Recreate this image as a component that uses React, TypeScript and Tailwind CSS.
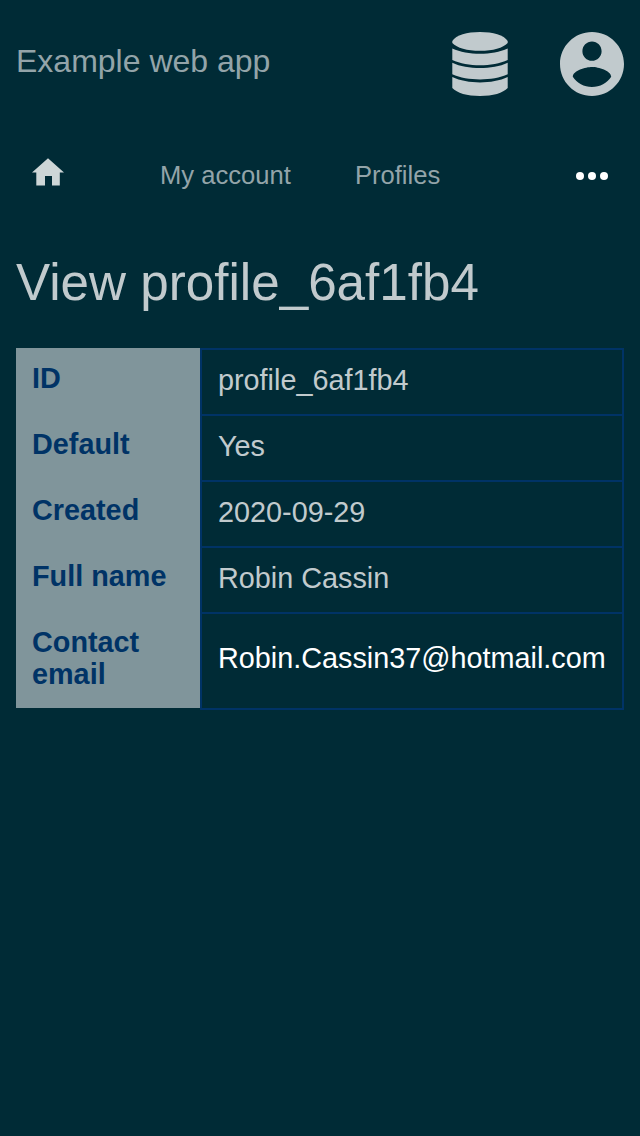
const rows = [
  { label: "ID", value: "profile_6af1fb4" },
  { label: "Default", value: "Yes" },
  { label: "Created", value: "2020-09-29" },
  { label: "Full name", value: "Robin Cassin" },
];

function DatabaseIcon() {
  return (
    <svg viewBox="0 0 56 64" className="h-16 w-14 fill-current">
      <path d="M.3 9C4 3 15 0 28 0S52 3 55.7 9V11C51 16 41 18.800 28 18.800S5 16 .3 11z" />
      <path d="M.3 16.600C8 20.300 18 21.800 28 21.800S48 20.300 55.7 16.600V28C48 31.700 38 33.200 28 33.200S8 31.700 .3 28z" />
      <path d="M.3 30.800C8 34.500 18 36 28 36S48 34.500 55.7 30.800V42.300C48 46 38 47.400 28 47.400S8 46 .3 42.300z" />
      <path d="M.3 45C8 48.700 18 50.400 28 50.400S48 48.700 55.7 45V56C51 61 41 64 28 64S5 61 .3 56z" />
    </svg>
  );
}

function AccountIcon() {
  return (
    <svg viewBox="2 2 20 20" className="h-16 w-16 fill-current">
      <path d="M12 2C6.480 2 2 6.480 2 12s4.480 10 10 10 10-4.480 10-10S17.520 2 12 2zm0 3c1.660 0 3 1.340 3 3s-1.340 3-3 3-3-1.340-3-3 1.340-3 3-3zm0 14.200c-2.500 0-4.710-1.280-6-3.220.03-1.990 4-3.080 6-3.080 1.990 0 5.970 1.090 6 3.080-1.290 1.940-3.500 3.220-6 3.220z" />
    </svg>
  );
}

export default function App() {
  return (
    <div className="min-h-[1136px] w-[640px] bg-[#002b36] font-['Liberation_Sans',sans-serif] text-[#c1cacd]">
      <header className="flex h-32 items-start justify-between px-4 pt-8">
        <h1 className="pt-[11px] text-[32px] leading-[37px] text-[#93a4a9]">Example web app</h1>
        <div className="flex gap-[52px]">
          <DatabaseIcon />
          <AccountIcon />
        </div>
      </header>
      <nav className="flex h-24 items-center px-8 text-[25.6px] text-[#93a4a9]">
        <svg viewBox="0 0 32 28" className="mb-2 h-7 w-8 fill-[#cdd6d7]">
          <path d="M16 .2L32 14.600h-4.200v13h-7.800V18h-7v9.600H4.300v-13H0z" />
        </svg>
        <a className="mb-0.5 ml-24">My account</a>
        <a className="mb-0.5 ml-16">Profiles</a>
        <svg viewBox="0 0 32 8" className="ml-auto h-2 w-8 fill-white">
          <circle cx="4" cy="4" r="4" />
          <circle cx="16" cy="4" r="4" />
          <circle cx="28" cy="4" r="4" />
        </svg>
      </nav>
      <main className="px-4 pt-[29px]">
        <h2 className="text-[51.2px] leading-[59px]">View profile_6af1fb4</h2>
        <dl className="mt-9 text-[28.8px] leading-8">
          {rows.map((row) => (
            <div key={row.label} className="flex h-[66px]">
              <dt className="w-[184px] bg-[#80959b] px-4 pt-[14px] font-bold text-[#003366]">{row.label}</dt>
              <dd className="flex-1 border-2 border-b-0 border-[#003366] px-4 pt-[14px]">{row.value}</dd>
            </div>
          ))}
          <div className="flex h-[98px]">
            <dt className="h-24 w-[184px] bg-[#80959b] px-4 pt-[14px] font-bold text-[#003366]">Contact email</dt>
            <dd className="flex flex-1 items-center border-2 border-[#003366] px-4 pb-1.5 text-white">Robin.Cassin37@hotmail.com</dd>
          </div>
        </dl>
      </main>
    </div>
  );
}
